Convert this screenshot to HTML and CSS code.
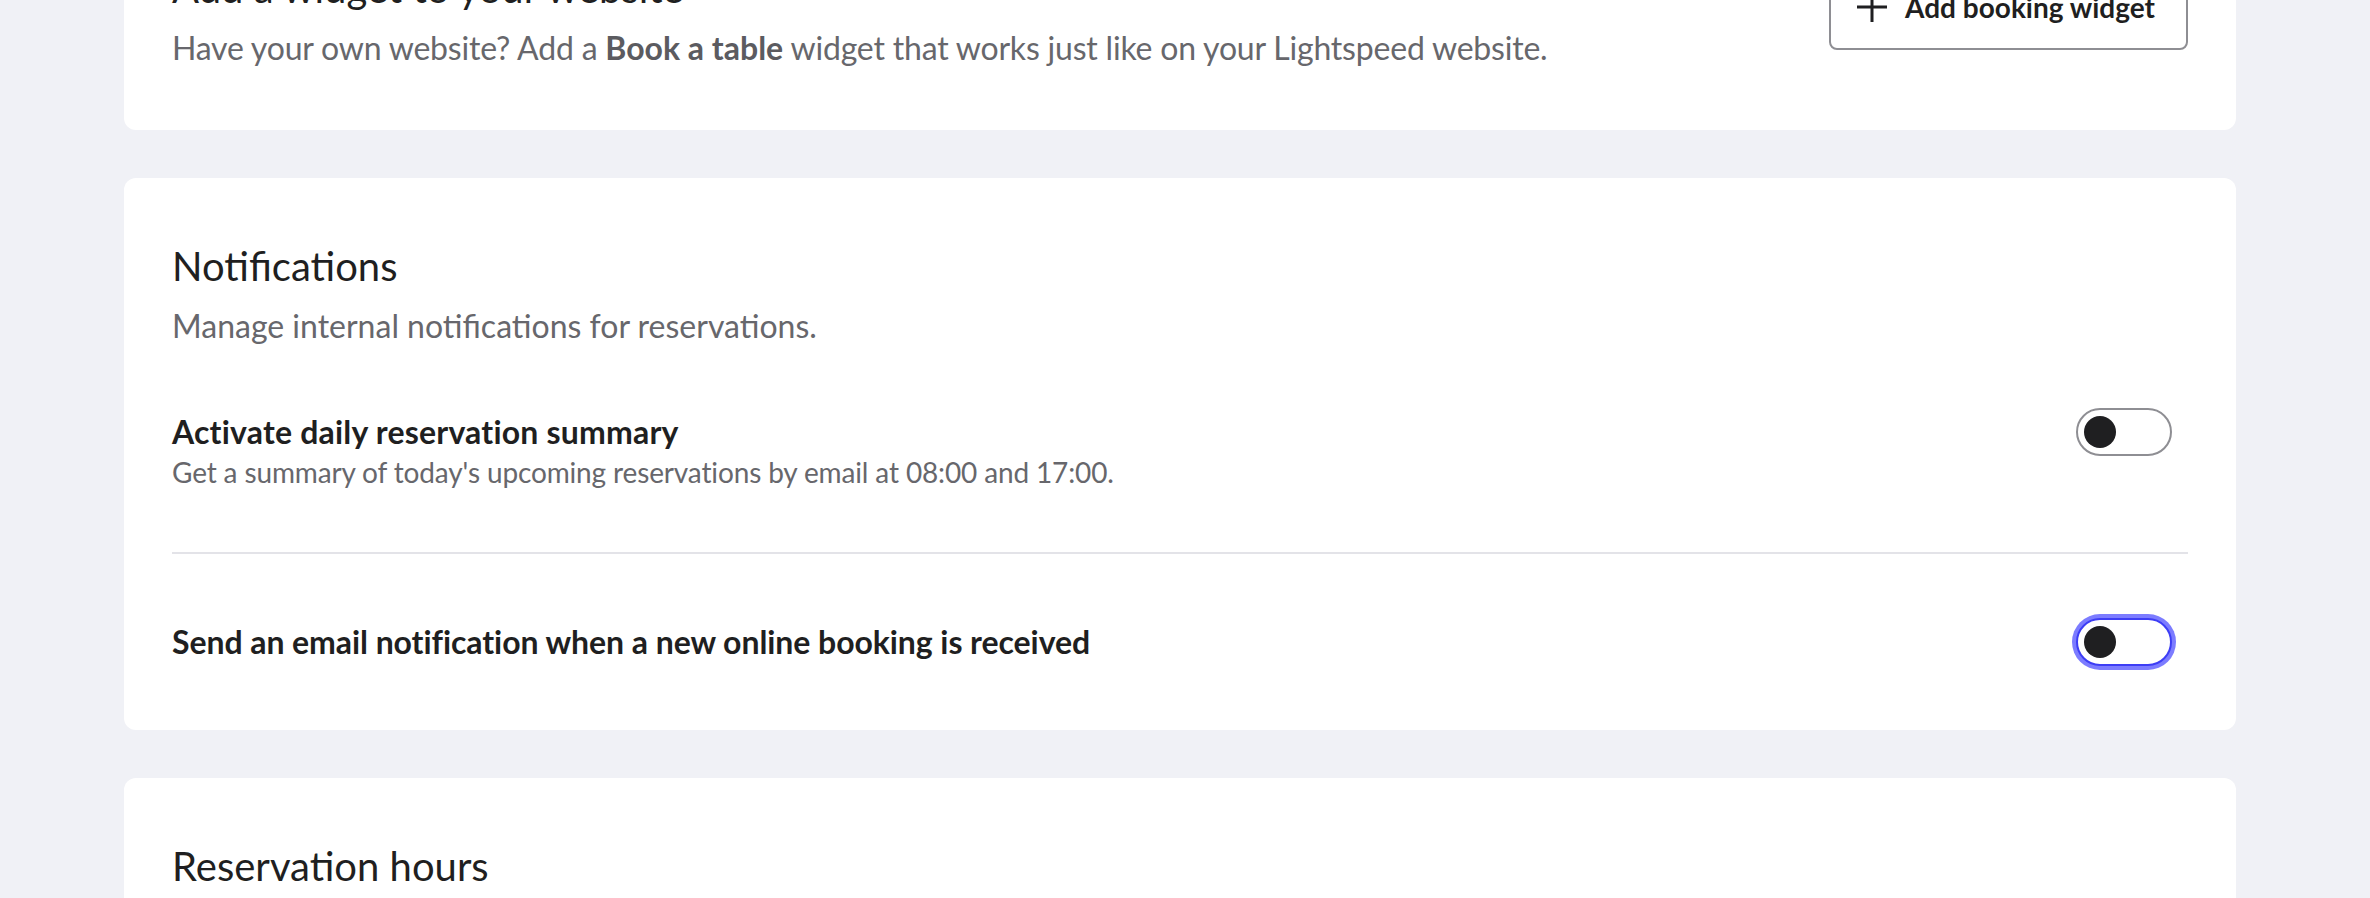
FILE: index.html
```html
<!DOCTYPE html>
<html lang="en">
<head>
<meta charset="utf-8">
<title>Online reservations settings</title>
<link rel="stylesheet" href="styles.css">
</head>
<body>
<main class="page">
  <section class="card card-widget">
    <div class="card-head">
      <div class="head-text">
        <h2 class="card-title">Add a widget to your website</h2>
        <p class="card-sub">Have your own website? Add a <strong>Book a table</strong> widget that works just like on your Lightspeed website.</p>
      </div>
      <button class="btn-outline" type="button">
        <svg class="btn-icon" width="30" height="30" viewBox="0 0 30 30" aria-hidden="true">
          <path d="M15 0V30M0 15H30" stroke="#1f1f21" stroke-width="3" fill="none"/>
        </svg>
        <span>Add booking widget</span>
      </button>
    </div>
  </section>

  <section class="card card-notif">
    <h2 class="card-title">Notifications</h2>
    <p class="card-sub">Manage internal notifications for reservations.</p>
    <div class="setting-row setting-row-first">
      <div class="setting-text">
        <div class="setting-label">Activate daily reservation summary</div>
        <div class="setting-desc">Get a summary of today's upcoming reservations by email at 08:00 and 17:00.</div>
      </div>
      <span class="switch switch-top" role="switch" aria-checked="false"><span class="knob"></span></span>
    </div>
    <div class="setting-row setting-row-last">
      <div class="setting-text">
        <div class="setting-label">Send an email notification when a new online booking is received</div>
      </div>
      <span class="switch switch-focus" role="switch" aria-checked="false"><span class="knob"></span></span>
    </div>
  </section>

  <section class="card card-hours">
    <h2 class="card-title">Reservation hours</h2>
  </section>
</main>
</body>
</html>
```

FILE: styles.css
```css
html, body {
  margin: 0;
  padding: 0;
  height: 898px;
  overflow: hidden;
  background: #f0f1f6;
  font-family: "Lato", "Open Sans", sans-serif;
  color: #1f1f21;
}

.page {
  display: flex;
  flex-direction: column;
  gap: 48px;
  width: 2112px;
  margin: -100px 0 0 124px;
}

.card {
  background: #ffffff;
  border-radius: 12px;
  padding: 60px 48px 64px;
}

.card-widget {
  padding-bottom: 58px;
}

.card-head {
  display: flex;
  justify-content: space-between;
  align-items: flex-start;
  gap: 48px;
}

.card-title {
  margin: 0;
  font-size: 40px;
  line-height: 56px;
  font-weight: 400;
  color: #1f1f21;
}

.card-sub {
  margin: 8px 0 0;
  font-size: 32px;
  line-height: 48px;
  color: #67676c;
}

.card-widget .card-sub {
  letter-spacing: -0.2px;
}

.card-sub strong {
  font-weight: 700;
  color: #5b5b60;
  letter-spacing: 0;
}

.btn-outline {
  margin-top: 4px;
  height: 86px;
  display: inline-flex;
  align-items: center;
  gap: 18px;
  padding: 0 31px 0 26px;
  border: 2px solid #8e8e93;
  border-radius: 8px;
  background: #ffffff;
  font-family: "Lato", "Open Sans", sans-serif;
  font-size: 28px;
  font-weight: 700;
  color: #1f1f21;
  white-space: nowrap;
}

.btn-icon {
  display: block;
  flex: none;
}

.setting-row {
  display: flex;
  justify-content: space-between;
  gap: 48px;
}

.setting-row-first {
  align-items: flex-start;
  padding: 60px 0 62px;
  border-bottom: 2px solid #e3e3e8;
}

.setting-row-last {
  align-items: center;
  padding-top: 64px;
}

.setting-label {
  font-size: 32px;
  line-height: 44px;
  font-weight: 700;
  color: #1f1f21;
}

.setting-row-first .setting-label {
  letter-spacing: 0.2px;
}

.setting-row-last .setting-label {
  line-height: 48px;
  letter-spacing: -0.07px;
}

.setting-desc {
  font-size: 28px;
  line-height: 36px;
  color: #67676c;
  letter-spacing: -0.14px;
}

.switch {
  flex: none;
  box-sizing: border-box;
  width: 96px;
  height: 48px;
  margin-right: 16px;
  padding: 6px;
  border: 2px solid #8e8e93;
  border-radius: 24px;
  background: #ffffff;
  display: flex;
  align-items: center;
}

.switch-top {
  margin-top: -2px;
}

.switch-focus {
  border-color: #3d3df5;
  box-shadow: 0 0 0 4px #7c7cff;
}

.knob {
  width: 32px;
  height: 32px;
  border-radius: 50%;
  background: #1f1f21;
}

.card-hours {
  min-height: 300px;
}
```
